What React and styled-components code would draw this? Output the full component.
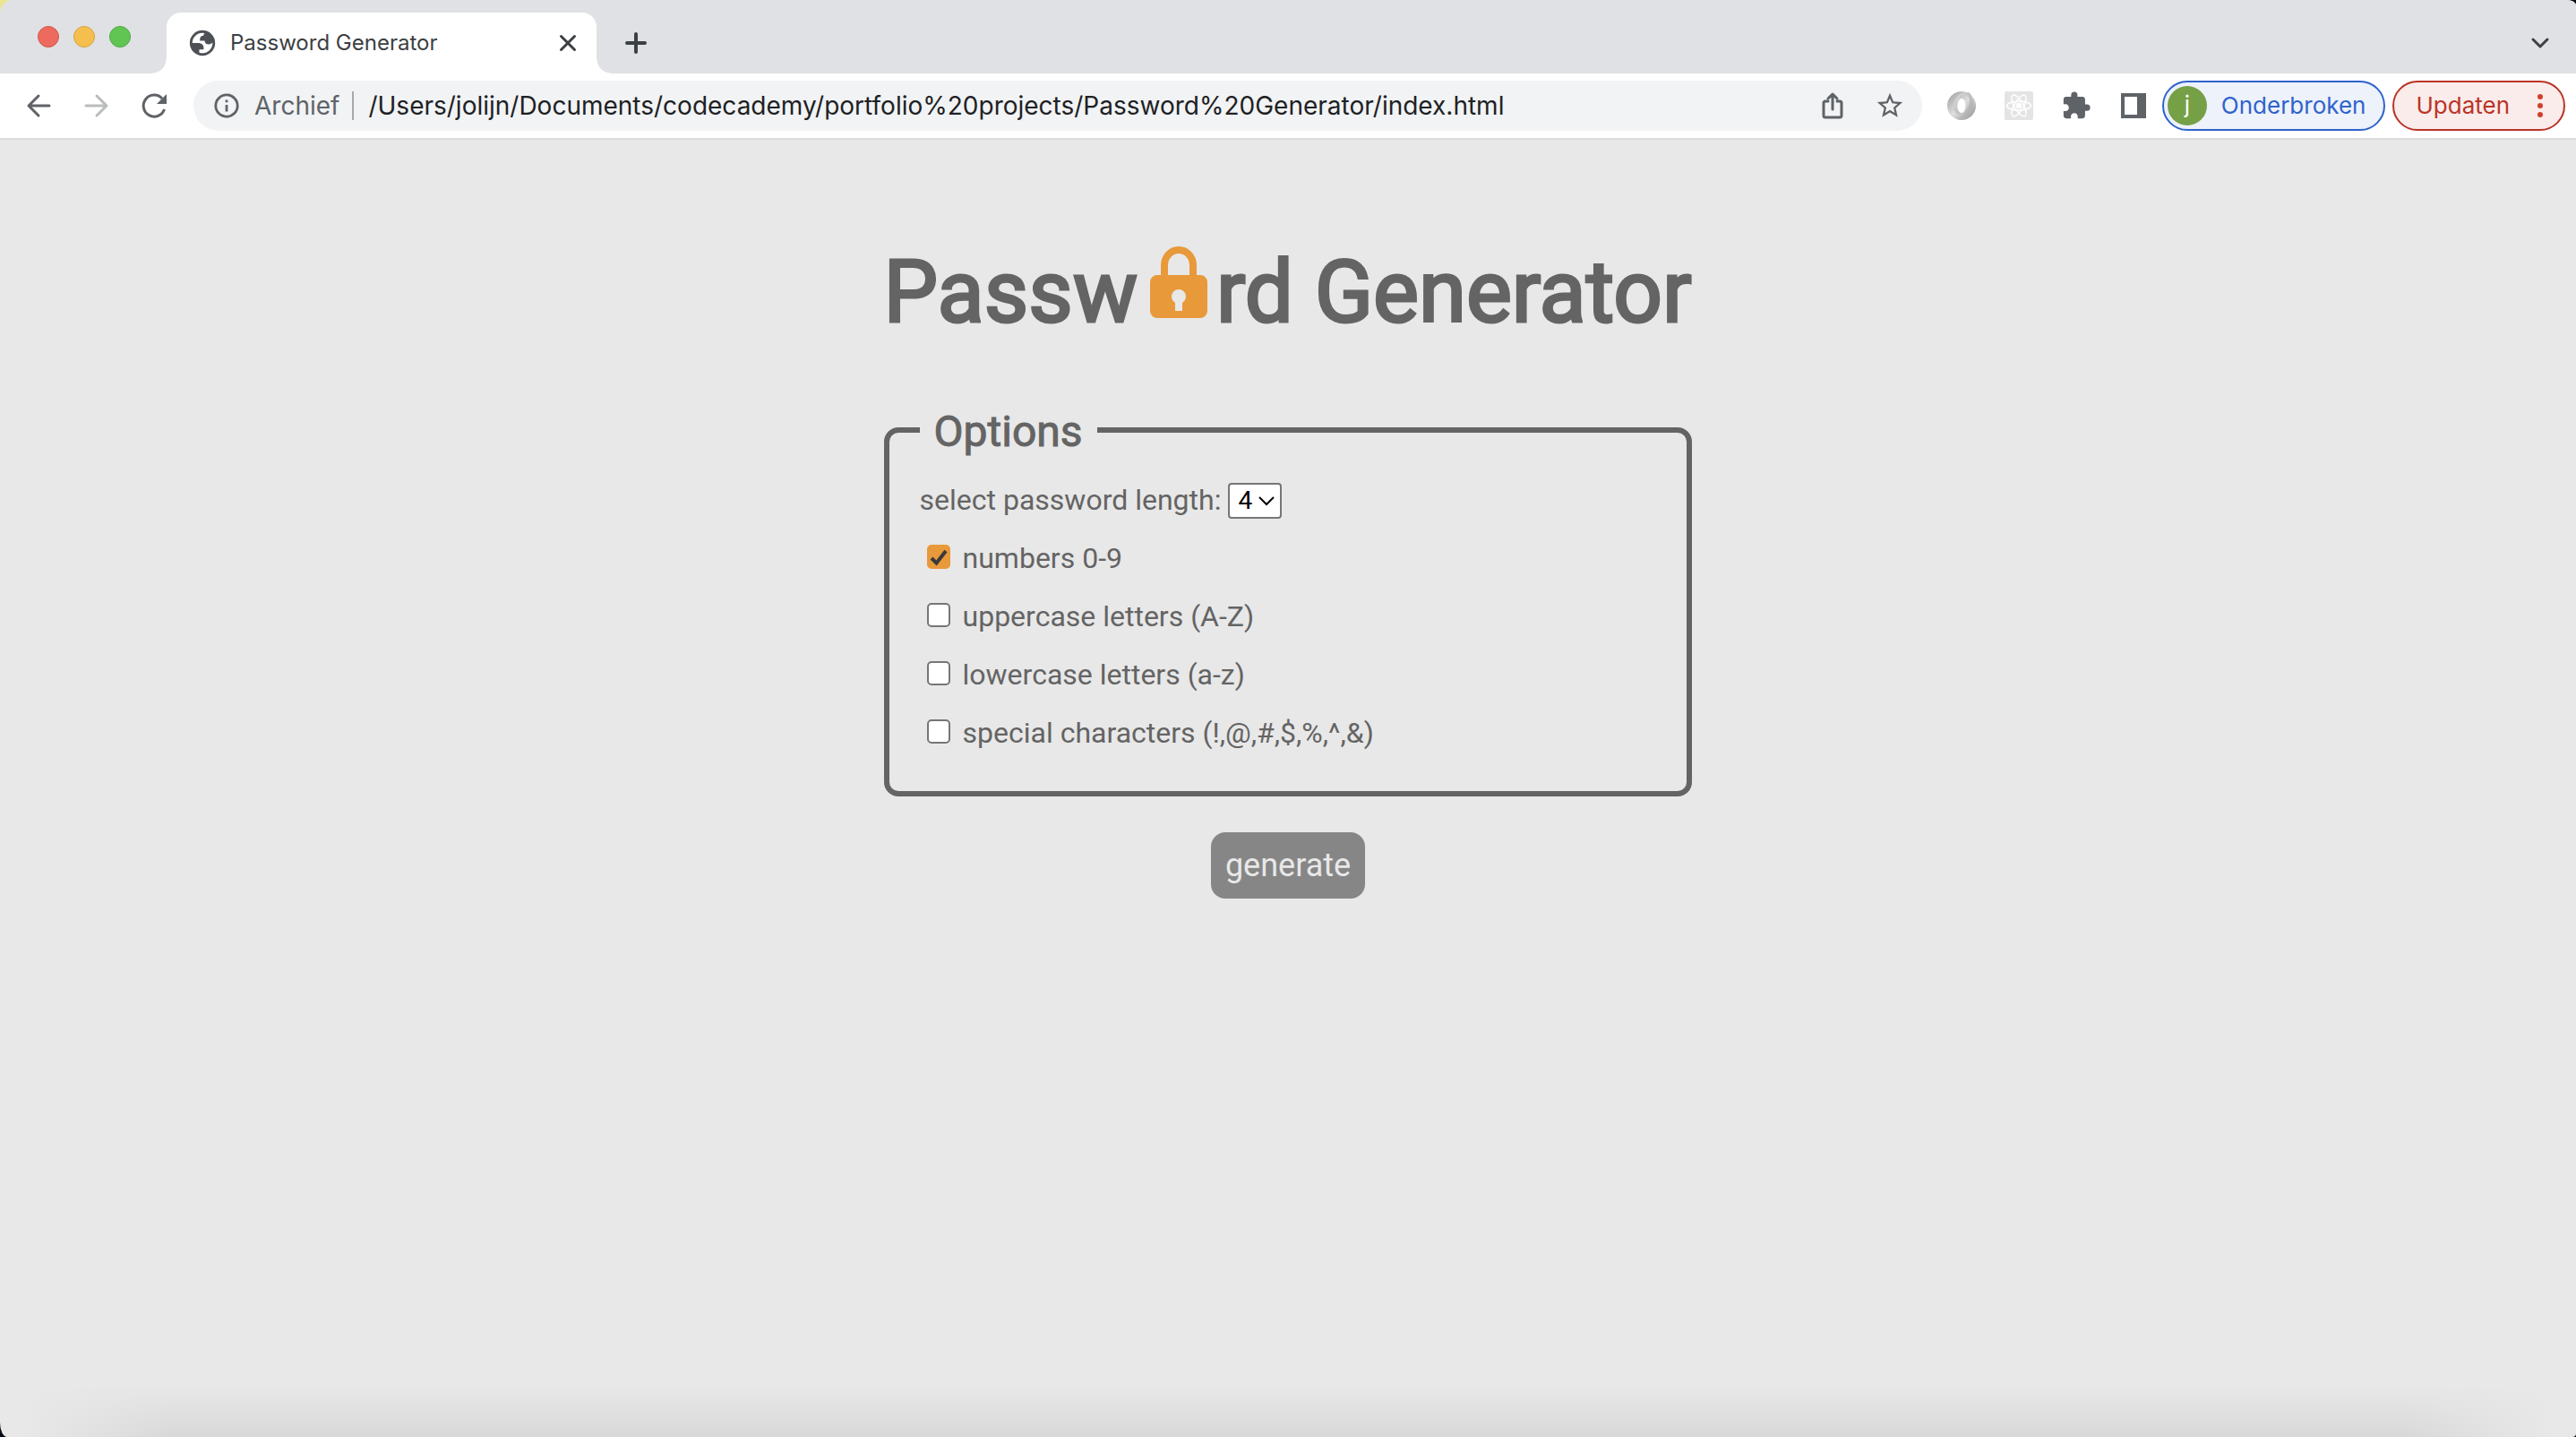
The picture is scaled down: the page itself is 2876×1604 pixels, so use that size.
import React, { useState } from "react";
import styled, { createGlobalStyle } from "styled-components";

const ui = `Inter, Roboto, "Liberation Sans", sans-serif`;
const body = `Roboto, "Liberation Sans", sans-serif`;
const ink = "#646464";
const orange = "#e8993a";

const Global = createGlobalStyle`
  *, *::before, *::after { box-sizing: border-box; }
  body {
    margin: 0;
    font-family: ${body};
    background: linear-gradient(135deg, #ebe592 0 30px, #070c18 30px);
  }
  button, input, select { font: inherit; color: inherit; margin: 0; }
  svg { display: block; flex: none; }
`;

const Window = styled.div`
  display: flex;
  flex-direction: column;
  min-height: 100vh;
  overflow: hidden;
  border-radius: 14px 10px 4px 8px / 17px 6px 4px 16px;
  background: #e8e8e8;
`;

const IconButton = styled.button`
  display: grid;
  place-items: center;
  flex: none;
  width: ${(p) => p.$w || 64}px;
  height: 56px;
  padding: 0;
  border: 0;
  background: none;
  color: ${(p) => p.$color || "#5f6368"};
`;

/* ---------- tab strip ---------- */
const TabStrip = styled.header`
  display: flex;
  align-items: flex-end;
  height: 82px;
  padding: 0 8px 0 42px;
  background: #dfe1e5;
  color: #3c4043;
`;

const Lights = styled.div`
  display: flex;
  align-self: center;
  gap: 16px;
  margin-right: 40px;
`;

const Light = styled.button`
  width: 24px;
  height: 24px;
  padding: 0;
  border: 1px solid ${(p) => p.$edge};
  border-radius: 50%;
  background: ${(p) => p.$fill};
`;

const Tab = styled.div`
  position: relative;
  display: flex;
  align-items: center;
  width: 480px;
  height: 68px;
  padding: 0 8px 0 23px;
  border-radius: 16px 16px 0 0;
  background: #fff;
  font-family: ${ui};
  &::before, &::after {
    content: "";
    position: absolute;
    bottom: 0;
    width: 16px;
    height: 16px;
  }
  &::before {
    right: 100%;
    background: radial-gradient(circle at 0 0, transparent 15px, #fff 16px);
  }
  &::after {
    left: 100%;
    background: radial-gradient(circle at 100% 0, transparent 15px, #fff 16px);
  }
`;

const TabTitle = styled.span`
  flex: 1;
  margin-left: 14px;
  font-size: 24px;
  line-height: 32px;
  white-space: nowrap;
`;

const StripButton = styled(IconButton)`
  height: 68px;
  color: #3c4043;
`;

const Spacer = styled.div`
  flex: 1;
`;

/* ---------- toolbar ---------- */
const Toolbar = styled.nav`
  display: flex;
  align-items: center;
  height: 74px;
  padding: 0 12px;
  border-bottom: 2px solid #dcdcdc;
  background: #fff;
  font-family: ${ui};
`;

const Omnibox = styled.div`
  display: flex;
  flex: 1;
  align-items: center;
  height: 56px;
  margin: 0 12px;
  padding: 0 4px 0 22px;
  border-radius: 28px;
  background: #f1f3f4;
  color: #5f6368;
  font-size: 28px;
  line-height: 36px;
`;

const Scheme = styled.label`
  margin: 0 14px 0 16px;
`;

const Divider = styled.span`
  width: 2px;
  height: 32px;
  margin-right: 16px;
  background: #a6a9ad;
`;

const Address = styled.input`
  flex: 1;
  min-width: 0;
  height: 40px;
  padding: 0;
  border: 0;
  outline: 0;
  background: none;
  color: #202124;
`;

const Pill = styled.button`
  display: flex;
  align-items: center;
  flex: none;
  gap: ${(p) => p.$gap}px;
  height: 56px;
  padding: ${(p) => p.$pad};
  border: 2px solid ${(p) => p.$line};
  border-radius: 28px;
  background: ${(p) => p.$fill};
  color: ${(p) => p.$line};
  font-size: 26px;
  line-height: 36px;
  & + & { margin-left: 8px; }
`;

const Avatar = styled.span`
  width: 44px;
  height: 44px;
  border-radius: 50%;
  background: #76a046;
  color: #fff;
  line-height: 42px;
  text-align: center;
`;

/* ---------- page ---------- */
const Page = styled.main`
  display: flex;
  flex: 1;
  flex-direction: column;
  align-items: center;
  padding: 112px 32px 64px;
  color: ${ink};
`;

const Panel = styled.form`
  display: flex;
  flex-direction: column;
  align-items: center;
`;

const Title = styled.h1`
  margin: 0;
  padding: 0 1px 66px 0;
  font-size: 96px;
  font-weight: 400;
  line-height: 116px;
  white-space: nowrap;
  -webkit-text-stroke: 3px ${ink};
  svg { display: inline-block; margin: 0 10px 0 14px; vertical-align: 4px; }
`;

const Options = styled.fieldset`
  display: flex;
  flex-direction: column;
  align-self: stretch;
  gap: 28px;
  min-width: 0;
  margin: 0;
  padding: 30px 34px 46px;
  border: 6px solid ${ink};
  border-radius: 16px;
  font-size: 32px;
  line-height: 37px;
`;

const Legend = styled.legend`
  padding: 4px 16px 0;
  font-size: 48px;
  line-height: 56px;
  -webkit-text-stroke: 1px ${ink};
`;

const Row = styled.div`
  display: flex;
  align-items: center;
  height: 37px;
`;

const Stack = styled.span`
  display: inline-grid;
  align-items: center;
  justify-items: ${(p) => p.$justify || "center"};
  margin: ${(p) => p.$margin};
  & > * { grid-area: 1 / 1; }
  & > svg { pointer-events: none; }
`;

const Length = styled.select`
  appearance: none;
  width: 60px;
  height: 40px;
  padding: 0 0 0 9px;
  border: 2px solid #767676;
  border-radius: 4px;
  background: #fff;
  color: #000;
  font-size: 28px;
  line-height: 36px;
`;

const Box = styled.input`
  appearance: none;
  width: 26px;
  height: 27px;
  border: 2px solid #767676;
  border-radius: 5px;
  background: #fff;
  &:checked { border-color: ${orange}; background: ${orange}; }
`;

const Generate = styled.button`
  height: 74px;
  margin-top: 40px;
  padding: 0 16px;
  border: 0;
  border-radius: 16px;
  background: #868686;
  color: #e8e8e8;
  font-size: 36px;
  line-height: 44px;
`;

const Shade = styled.footer`
  height: 56px;
  margin: 0 32px;
  background: linear-gradient(#d8d8d800, #d8d8d8);
  mask-image: linear-gradient(90deg, transparent, #000 160px, #000 calc(100% - 160px), transparent);
`;

/* ---------- icons ---------- */
const Line = ({ size = 32, w = 3, cap = "round", children }) => (
  <svg width={size} height={size} viewBox="0 0 32 32" fill="none" stroke="currentColor"
    strokeWidth={w} strokeLinecap={cap} strokeLinejoin="round" aria-hidden="true">{children}</svg>
);

const Globe = () => (
  <svg width="34" height="34" viewBox="0 0 24 24" fill="#4d5156" aria-hidden="true">
    <circle cx="12" cy="12" r="10" />
    <path fill="#fff" d="M4 12h4.400c3.407.022 4.922 1.730 4.543 5.127H9.488v2.470a8.004 8.004 0 0 0 10.498-8.083C19.327 12.504 18.332 13 17 13c-2.137 0-3.206-.916-3.206-2.750h-3.748c-.274-2.728.683-4.092 2.870-4.092 0-.975.327-1.597.811-1.970A8.004 8.004 0 0 0 4 12z" />
  </svg>
);

const Lock = () => (
  <svg width="64" height="80" viewBox="0 0 64 80" aria-hidden="true">
    <path d="M16 34V21a16 17 0 0 1 32 0V34" fill="none" stroke={orange} strokeWidth="8" />
    <path fillRule="evenodd" fill={orange}
      d="M8 32H56a8 8 0 0 1 8 8V72a8 8 0 0 1-8 8H8a8 8 0 0 1-8-8V40a8 8 0 0 1 8-8ZM32 48a8 8 0 0 0-8 8c0 3 1.500 5 4 7v9h8v-9c2.500-2 4-4 4-7a8 8 0 0 0-8-8Z" />
  </svg>
);

const JsonMark = () => (
  <svg width="32" height="32" viewBox="0 0 32 32" aria-hidden="true">
    <defs>
      <linearGradient id="ja" x1="0" y1="0" x2="1" y2="1">
        <stop offset="0" stopColor="#dcdcdc" /><stop offset="1" stopColor="#a4a4a4" />
      </linearGradient>
      <linearGradient id="jb" x1="1" y1="1" x2="0" y2="0">
        <stop offset="0" stopColor="#8a8a8a" /><stop offset=".5" stopColor="#dedede" /><stop offset="1" stopColor="#9a9a9a" />
      </linearGradient>
    </defs>
    <circle cx="16" cy="16" r="16" fill="url(#jb)" />
    <path fill="url(#ja)" d="M24 1C14 0 7 8 7 17c0 6 4 10 9 8-4-2-5-5-5-9 0-7 5-12 9-12 3 0 5 3 5 6 0 8-5 16-14 21 3 1 5 1 7 0 7-3 11-10 11-17 0-6-2-11-5-13Z" />
    <ellipse cx="16" cy="16" rx="4.500" ry="8" fill="#fff" />
  </svg>
);

const ReactMark = () => (
  <svg width="32" height="32" viewBox="0 0 32 32" fill="none" stroke="#fff" strokeWidth="1.500" aria-hidden="true">
    <rect width="32" height="32" rx="2" fill="#e4e4e4" stroke="none" />
    <ellipse cx="16" cy="16" rx="13.500" ry="5" />
    <ellipse cx="16" cy="16" rx="13.500" ry="5" transform="rotate(60 16 16)" />
    <ellipse cx="16" cy="16" rx="13.500" ry="5" transform="rotate(120 16 16)" />
    <circle cx="16" cy="16" r="2.500" fill="#fff" />
  </svg>
);

const options = [
  ["numbers", "numbers 0-9"],
  ["uppercase", "uppercase letters (A-Z)"],
  ["lowercase", "lowercase letters (a-z)"],
  ["special", "special characters (!,@,#,$,%,^,&)"],
];

export default function App() {
  const [picked, setPicked] = useState({ numbers: true });
  return (
    <Window>
      <Global />
      <TabStrip>
        <Lights>
          <Light $fill="#ed6a5e" $edge="#d35549" aria-label="Sluiten" />
          <Light $fill="#f5bf4f" $edge="#d8a13a" aria-label="Minimaliseren" />
          <Light $fill="#61c554" $edge="#4fa73f" aria-label="Vergroten" />
        </Lights>
        <Tab>
          <Globe />
          <TabTitle>Password Generator</TabTitle>
          <StripButton $w={48} aria-label="Tabblad sluiten">
            <Line size={24} w={4}><path d="M6 6 26 26M26 6 6 26" /></Line>
          </StripButton>
        </Tab>
        <StripButton $w={88} aria-label="Nieuw tabblad">
          <Line w={4}><path d="M16 6V26M6 16H26" /></Line>
        </StripButton>
        <Spacer />
        <StripButton aria-label="Tabbladen zoeken">
          <Line w={3}><path d="M8 12l8 8 8-8" /></Line>
        </StripButton>
      </TabStrip>

      <Toolbar>
        <IconButton aria-label="Terug">
          <Line><path d="M27 16H4M15 5 4 16 15 27" /></Line>
        </IconButton>
        <IconButton $color="#babcbe" aria-label="Vooruit">
          <Line><path d="M4 16H27M16 5 27 16 16 27" /></Line>
        </IconButton>
        <IconButton aria-label="Opnieuw laden">
          <Line cap="butt"><path d="M27.500 20A12 12 0 1 1 25 8" /><path d="M30 3V14H19Z" fill="currentColor" stroke="none" /></Line>
        </IconButton>
        <Omnibox>
          <Line size={30} cap="butt"><circle cx="16" cy="16" r="13" /><path d="M16 15v8M16 9v3" /></Line>
          <Scheme htmlFor="address">Archief</Scheme>
          <Divider />
          <Address id="address" defaultValue="/Users/jolijn/Documents/codecademy/portfolio%20projects/Password%20Generator/index.html" />
          <IconButton aria-label="Delen">
            <Line w={3}><path d="M11 11H8a2 2 0 0 0-2 2V27a2 2 0 0 0 2 2H24a2 2 0 0 0 2-2V13a2 2 0 0 0-2-2H21M16 20V3M11 8l5-5 5 5" /></Line>
          </IconButton>
          <IconButton aria-label="Bladwijzer">
            <svg width="34" height="34" viewBox="0 0 24 24" fill="currentColor" aria-hidden="true">
              <path d="M22 9.240l-7.190-.62L12 2 9.190 8.630 2 9.240l5.460 4.730L5.820 21 12 17.270 18.180 21l-1.630-7.030L22 9.240zM12 15.400l-3.760 2.270 1-4.280-3.320-2.880 4.380-.38L12 6.100l1.710 4.040 4.380.38-3.320 2.880 1 4.280L12 15.400z" />
            </svg>
          </IconButton>
        </Omnibox>
        <IconButton aria-label="JSON"><JsonMark /></IconButton>
        <IconButton aria-label="React"><ReactMark /></IconButton>
        <IconButton aria-label="Extensies">
          <svg width="34" height="34" viewBox="0 0 24 24" fill="currentColor" aria-hidden="true">
            <path d="M20.500 11H19V7c0-1.100-.9-2-2-2h-4V3.500a2.500 2.500 0 0 0-5 0V5H4c-1.100 0-1.990.9-1.990 2v3.800H3.500c1.490 0 2.700 1.210 2.700 2.700s-1.210 2.700-2.700 2.700H2V20c0 1.100.9 2 2 2h3.800v-1.500c0-1.490 1.210-2.700 2.700-2.700s2.700 1.210 2.700 2.700V22H17c1.100 0 2-.9 2-2v-4h1.500a2.500 2.500 0 0 0 0-5z" />
          </svg>
        </IconButton>
        <IconButton aria-label="Zijpaneel">
          <svg width="28" height="28" viewBox="0 0 28 28" aria-hidden="true">
            <path fill="currentColor" fillRule="evenodd" d="M0 0H28V28H0ZM4 4V24H18V4Z" />
          </svg>
        </IconButton>
        <Pill $line="#2f63cb" $fill="#edf2fb" $pad="0 20px 0 4px" $gap={16}>
          <Avatar>j</Avatar>Onderbroken
        </Pill>
        <Pill $line="#ba3427" $fill="#faeceb" $pad="0 10px 0 24px" $gap={18}>
          Updaten
          <svg width="32" height="28" viewBox="0 0 32 28" fill="#d0402c" aria-hidden="true">
            <circle cx="16" cy="4" r="3" /><circle cx="16" cy="14" r="3" /><circle cx="16" cy="24" r="3" />
          </svg>
        </Pill>
      </Toolbar>

      <Page>
        <Panel onSubmit={(e) => e.preventDefault()}>
          <Title>Passw<Lock />rd Generator</Title>
          <Options>
            <Legend>Options</Legend>
            <Row>
              <label htmlFor="length">select password length:</label>
              <Stack $justify="end" $margin="0 0 0 8px">
                <Length id="length" defaultValue="4">
                  {[4, 5, 6, 7, 8, 9].map((n) => <option key={n}>{n}</option>)}
                </Length>
                <svg width="34" height="20" viewBox="0 0 34 20" fill="none" stroke="#000" strokeWidth="2" aria-hidden="true">
                  <path d="M9 6l8 8 8-8" />
                </svg>
              </Stack>
            </Row>
            {options.map(([id, text]) => (
              <Row key={id}>
                <Stack $margin="0 14px 4px 8px">
                  <Box type="checkbox" id={id} checked={!!picked[id]}
                    onChange={(e) => setPicked({ ...picked, [id]: e.target.checked })} />
                  {picked[id] && (
                    <svg width="26" height="26" viewBox="0 0 26 26" fill="none" stroke="#3a3a3a" strokeWidth="4" aria-hidden="true">
                      <path d="M5 14l5.500 5.500L21 6" />
                    </svg>
                  )}
                </Stack>
                <label htmlFor={id}>{text}</label>
              </Row>
            ))}
          </Options>
          <Generate type="submit">generate</Generate>
        </Panel>
      </Page>
      <Shade />
    </Window>
  );
}
